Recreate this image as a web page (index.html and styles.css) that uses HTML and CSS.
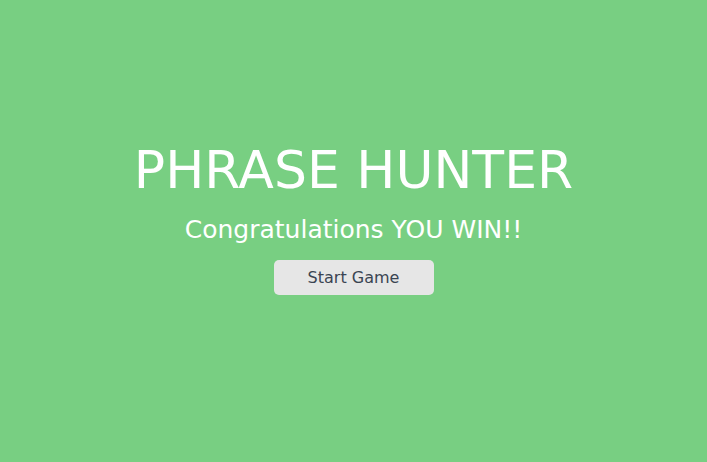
FILE: index.html
```html
<!DOCTYPE html>
<html>
<head>
<meta charset="utf-8">
<link rel="stylesheet" href="styles.css">
</head>
<body>
<div class="overlay">
  <h2 class="title">PHRASE HUNTER</h2>
  <h1 class="message">Congratulations YOU WIN!!</h1>
  <button class="btn-reset">Start Game</button>
</div>
</body>
</html>
```
FILE: styles.css
```css
html, body {
  margin: 0;
  padding: 0;
  height: 100%;
}
body {
  background: #78cf82;
  font-family: "DejaVu Sans", "Noto Sans", sans-serif;
}
.overlay {
  height: 100%;
  display: flex;
  flex-direction: column;
  align-items: center;
  padding-top: 137px;
  box-sizing: border-box;
}
.title {
  margin: 0;
  font-size: 52px;
  font-weight: 400;
  line-height: 66px;
  color: #fff;
}
.message {
  margin: 10px 0 0;
  font-size: 25px;
  font-weight: 400;
  line-height: 34px;
  color: #fff;
}
.btn-reset {
  margin-top: 13px;
  width: 160px;
  height: 35px;
  border: none;
  border-radius: 5px;
  background: #e6e6e6;
  color: #3a4452;
  font-family: inherit;
  font-size: 16px;
  padding: 0;
}
```
